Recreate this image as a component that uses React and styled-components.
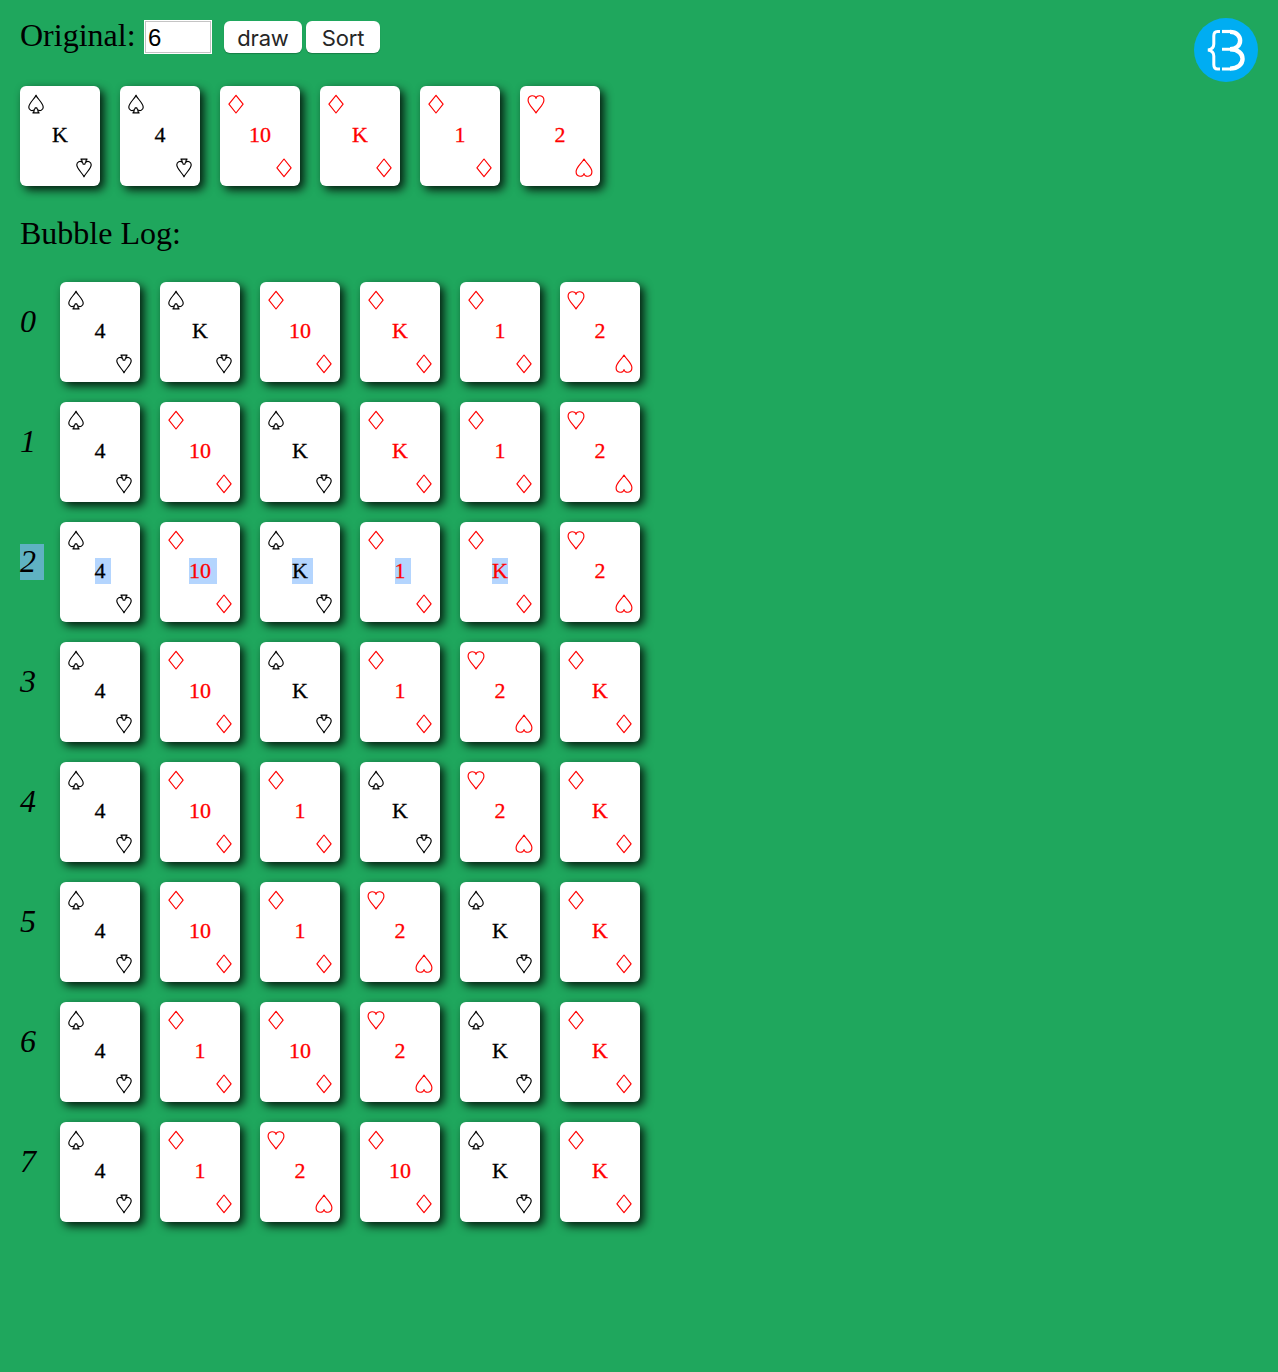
import React from "react";
import styled, { createGlobalStyle, css } from "styled-components";

const GlobalStyle = createGlobalStyle`
  * { box-sizing: border-box; }
  body {
    margin: 0;
    min-height: 100vh;
    background: #1fa75d;
    color: #000;
    font-family: "Liberation Serif", "Times New Roman", serif;
    font-size: 32px;
    line-height: 34px;
  }
`;

const Page = styled.div`
  display: flex;
  justify-content: space-between;
  align-items: flex-start;
  padding: 18px 20px 20px;
`;

const Toolbar = styled.div`
  display: flex;
  align-items: flex-start;
  height: 36px;
`;

const Caption = styled.label`
  width: 124px;
`;

const CountInput = styled.input`
  width: 68px;
  height: 34px;
  margin: 2px 12px 0 0;
  padding: 3px 2px 1px 3px;
  border: 1px solid #fff;
  border-radius: 0;
  outline: none;
  background: #fff;
  box-shadow: inset 0 0 0 1px #c4c4c4;
  color: #000;
  font: 24px "Liberation Sans", Arial, sans-serif;
`;

const Button = styled.button`
  width: ${(p) => p.$width}px;
  height: 32px;
  margin: 3px 4px 0 0;
  padding: 2px 0 0;
  border: 0;
  border-radius: 6px;
  background: #fff;
  box-shadow: 0 1px 1px rgba(0, 0, 0, 0.25);
  color: #262626;
  font: 22px/30px Inter, sans-serif;
  letter-spacing: -0.2px;
`;

const Hand = styled.div`
  display: flex;
  gap: 20px;
`;

const FirstHand = styled(Hand)`
  margin: 32px 0 30px;
`;

const Heading = styled.div`
  height: 36px;
`;

const Log = styled.div`
  display: flex;
  flex-direction: column;
  gap: 20px;
  margin-top: 30px;
`;

const LogRow = styled.div`
  display: flex;
`;

const Step = styled.div`
  width: 40px;
  padding-top: 22px;
  font-style: italic;
  white-space: pre;
`;

const StepText = styled.span`
  display: inline-block;
  height: 36px;
  ${(p) => p.$selected && css`background: #5fb2c2;`}
`;

const CardBox = styled.div`
  display: flex;
  flex-direction: column;
  justify-content: space-between;
  width: 80px;
  height: 100px;
  padding: 8px;
  border-radius: 6px;
  background: #fff;
  box-shadow: 4px 4px 10px rgba(0, 0, 0, 0.85);
  color: ${(p) => (p.$red ? "#f00" : "#000")};
`;

const SuitIcon = styled.svg`
  display: block;
  width: 16px;
  height: 20px;
  overflow: visible;
  fill: none;
  stroke: currentColor;
  stroke-width: 1.15;
  stroke-linejoin: round;
  ${(p) => p.$flipped && css`
    align-self: flex-end;
    transform: rotate(180deg);
  `}
`;

const Rank = styled.div`
  align-self: center;
  width: ${(p) => p.$width}px;
  height: 26px;
  margin-top: -3px;
  font-size: 22px;
  line-height: 26px;
  white-space: pre;
  -webkit-text-stroke: 0.3px currentColor;
`;

const RankText = styled.span`
  display: inline-block;
  height: 26px;
  ${(p) => p.$selected && css`background: #b4d5fe;`}
`;

const Logo = styled.svg`
  display: block;
  width: 64px;
  height: 64px;
`;

const SUITS = {
  s: "M8 1.2C6.8 4.6 .8 9 .8 13.2C.8 16.2 4.2 17.6 6.3 15.6C6.3 17 6 18.1 4.9 18.9H11.1C10 18.1 9.7 17 9.7 15.6C11.8 17.6 15.2 16.2 15.2 13.2C15.2 9 9.2 4.6 8 1.2ZM6.3 15.600Q7.100 14.800 7.200 13.800H8.800Q8.900 14.800 9.700 15.600",
  d: "M8 1.3L15.1 10.200L8 19L.9 10.200Z",
  h: "M8 4.500C7.600 .500 .1 .700 .1 6.300C.1 11 5.600 14.400 8 19C10.400 14.400 15.900 11 15.900 6.300C15.900 .700 8.400 .500 8 4.500Z",
};

const RANK_WIDTH = { 10: 22, K: 16 };

function Suit({ name, flipped }) {
  return (
    <SuitIcon viewBox="0 0 16 20" $flipped={flipped}>
      <path d={SUITS[name]} />
    </SuitIcon>
  );
}

function Card({ code, selected, last }) {
  const suit = code[0];
  const rank = code.slice(1);
  return (
    <CardBox $red={suit !== "s"}>
      <Suit name={suit} />
      <Rank $width={RANK_WIDTH[rank] || 11}>
        <RankText $selected={selected}>{rank + (selected && !last ? " " : "")}</RankText>
      </Rank>
      <Suit name={suit} flipped />
    </CardBox>
  );
}

const ORIGINAL = ["sK", "s4", "d10", "dK", "d1", "h2"];

const STEPS = [
  ["s4", "sK", "d10", "dK", "d1", "h2"],
  ["s4", "d10", "sK", "dK", "d1", "h2"],
  ["s4", "d10", "sK", "d1", "dK", "h2"],
  ["s4", "d10", "sK", "d1", "h2", "dK"],
  ["s4", "d10", "d1", "sK", "h2", "dK"],
  ["s4", "d10", "d1", "h2", "sK", "dK"],
  ["s4", "d1", "d10", "h2", "sK", "dK"],
  ["s4", "d1", "h2", "d10", "sK", "dK"],
];

const SELECTED_STEP = 2;
const LAST_SELECTED_CARD = 4;

export default function App() {
  return (
    <>
      <GlobalStyle />
      <Page>
        <main>
          <Toolbar>
            <Caption htmlFor="count">Original:</Caption>
            <CountInput id="count" defaultValue="6" />
            <Button $width={78}>draw</Button>
            <Button $width={74}>Sort</Button>
          </Toolbar>
          <FirstHand>
            {ORIGINAL.map((code) => <Card key={code} code={code} />)}
          </FirstHand>
          <Heading>Bubble Log:</Heading>
          <Log>
            {STEPS.map((cards, step) => (
              <LogRow key={step}>
                <Step>
                  <StepText $selected={step === SELECTED_STEP}>
                    {step + (step === SELECTED_STEP ? " " : "")}
                  </StepText>
                </Step>
                <Hand>
                  {cards.map((code, i) => (
                    <Card
                      key={code}
                      code={code}
                      selected={step === SELECTED_STEP && i <= LAST_SELECTED_CARD}
                      last={i === LAST_SELECTED_CARD}
                    />
                  ))}
                </Hand>
              </LogRow>
            ))}
          </Log>
        </main>
        <Logo viewBox="0 0 64 64">
          <circle cx="32" cy="32" r="32" fill="#00adf2" />
          <g fill="none" stroke="#fff">
            <path strokeWidth="3" d="M26 13.500H23.500Q19.800 13.500 19.800 18V26Q19.800 31 14 32Q19.800 33 19.800 38V46.500Q19.800 51 23.500 51H26" />
            <path strokeWidth="3.200" d="M28 13.500H36.500" />
            <path strokeWidth="4.400" d="M36 13.900C49.500 13.900 49.500 31.200 36 31.200C53 31.200 52.500 50.600 36 50.600" />
            <path strokeWidth="3" d="M28 31.200H37M28 51H36.500" />
          </g>
        </Logo>
      </Page>
    </>
  );
}
